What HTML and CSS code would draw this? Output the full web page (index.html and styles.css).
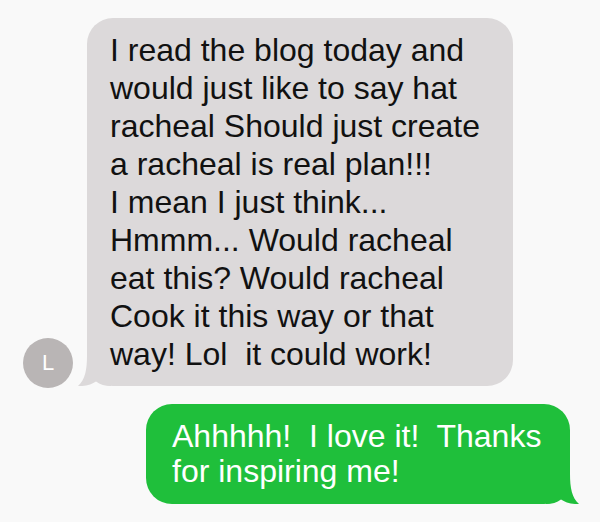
FILE: index.html
```html
<!DOCTYPE html>
<html lang="en">
<head>
    <meta charset="UTF-8">
    <meta name="viewport" content="width=device-width, initial-scale=1.0">
    <title>Messages</title>
    <link rel="stylesheet" href="styles.css">
</head>
<body>
    <div class="thread">
        <div class="row incoming">
            <div class="avatar">L</div>
            <div class="bubble gray">
                I read the blog today and<br>
                would just like to say hat<br>
                racheal Should just create<br>
                a racheal is real plan!!!<br>
                I mean I just think...<br>
                Hmmm... Would racheal<br>
                eat this? Would racheal<br>
                Cook it this way or that<br>
                way! Lol&nbsp; it could work!
                <svg class="tail tail-left" width="36" height="30" viewBox="0 0 36 30">
                    <path d="M10 0 C10 14 8 24 1 30 C9 30.5 15 28 19 25.5 C23 28.5 28 30 34 30 L34 0 Z" fill="#dcd9da"/>
                </svg>
            </div>
        </div>
        <div class="row outgoing">
            <div class="bubble green">
                Ahhhhh!&nbsp; I love it!&nbsp; Thanks<br>
                for inspiring me!
                <svg class="tail tail-right" width="36" height="30" viewBox="0 0 36 30">
                    <path d="M26 0 C26 14 28 24 35 30 C27 30.5 21 28 17 25.5 C13 28.5 8 30 2 30 L2 0 Z" fill="#1fbf3b"/>
                </svg>
            </div>
        </div>
    </div>
</body>
</html>
```

FILE: styles.css
```css
body {
    margin: 0;
    background-color: #f9f9f9;
    font-family: "Liberation Sans", Arial, sans-serif;
}
.thread {
    display: flex;
    flex-direction: column;
    gap: 18px;
    padding: 18px 30px 0 23px;
}
.row {
    display: flex;
    align-items: flex-end;
}
.outgoing {
    justify-content: flex-end;
}
.avatar {
    width: 50px;
    height: 50px;
    border-radius: 50%;
    background-color: #b9b5b5;
    color: #fff;
    font-size: 22px;
    display: flex;
    align-items: center;
    justify-content: center;
    margin-right: 14px;
    margin-bottom: -2px;
}
.bubble {
    position: relative;
    border-radius: 26px;
    font-size: 32px;
}
.gray {
    width: 403px;
    background-color: #dcd9da;
    color: #111;
    line-height: 38px;
    padding: 13px 0 13px 23px;
}
.green {
    width: 398px;
    background-color: #1fbf3b;
    color: #fff;
    line-height: 35px;
    padding: 15px 0 15px 26px;
}
.tail {
    position: absolute;
    bottom: 0;
}
.tail-left {
    left: -10px;
}
.tail-right {
    right: -10px;
}
```
